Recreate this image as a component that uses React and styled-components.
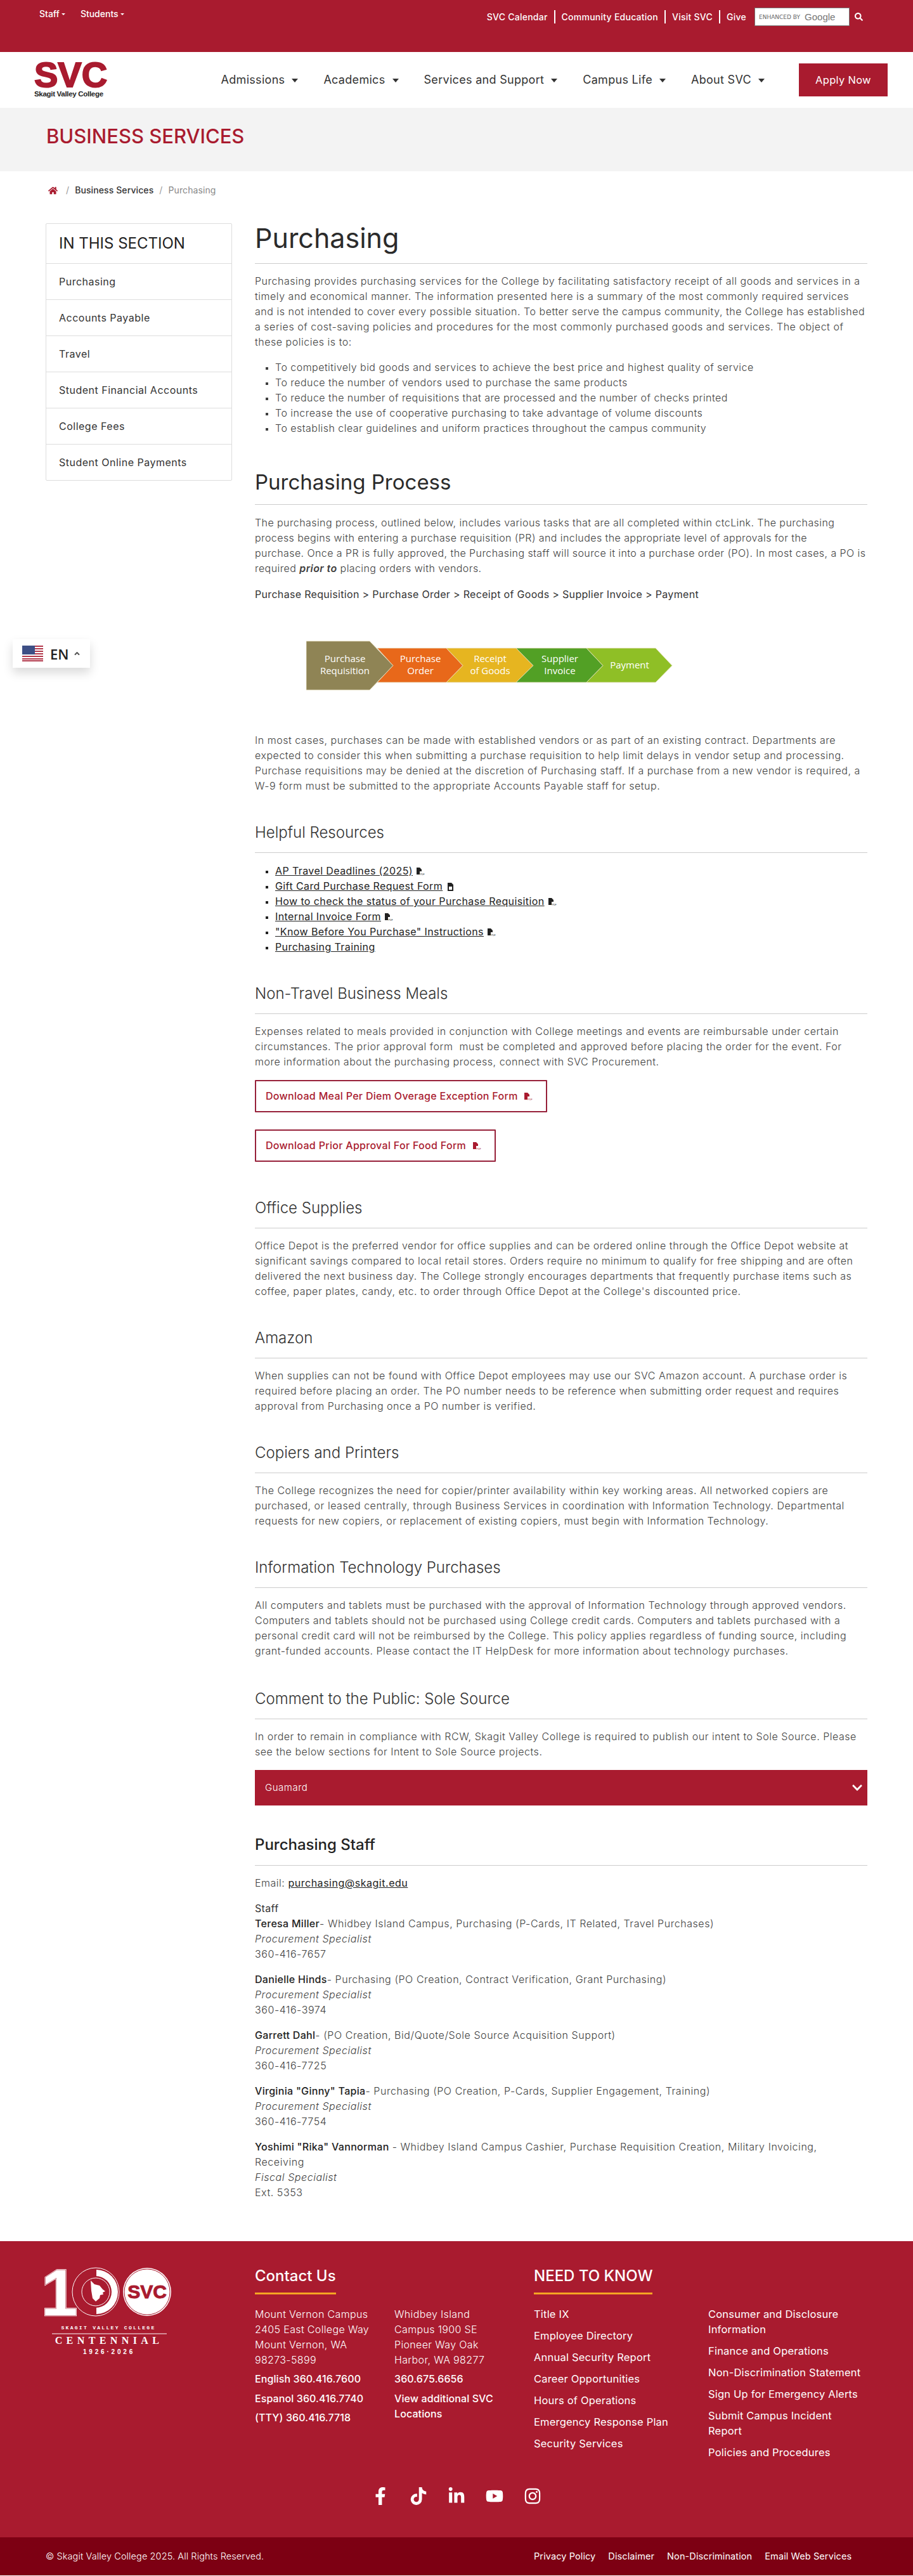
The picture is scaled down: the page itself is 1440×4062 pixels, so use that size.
import styled, { createGlobalStyle } from "styled-components";
import {
  FaHome,
  FaSearch,
  FaChevronDown,
  FaAngleUp,
  FaFacebookF,
  FaTiktok,
  FaLinkedinIn,
  FaYoutube,
  FaInstagram,
} from "react-icons/fa";

const CRIMSON = "#a91b2f";
const BODY_FONT = `Inter, "Noto Sans", sans-serif`;

const sections = ["Purchasing", "Accounts Payable", "Travel", "Student Financial Accounts", "College Fees", "Student Online Payments"];
const navItems = ["Admissions", "Academics", "Services and Support", "Campus Life", "About SVC"];
const goals = [
  "To competitively bid goods and services to achieve the best price and highest quality of service",
  "To reduce the number of vendors used to purchase the same products",
  "To reduce the number of requisitions that are processed and the number of checks printed",
  "To increase the use of cooperative purchasing to take advantage of volume discounts",
  "To establish clear guidelines and uniform practices throughout the campus community",
];
const resources = [
  { label: "AP Travel Deadlines (2025)", icon: "pdf" },
  { label: "Gift Card Purchase Request Form", icon: "doc" },
  { label: "How to check the status of your Purchase Requisition", icon: "pdf" },
  { label: "Internal Invoice Form", icon: "pdf" },
  { label: "\"Know Before You Purchase\" Instructions", icon: "pdf" },
  { label: "Purchasing Training" },
];
const staff = [
  { name: "Teresa Miller", role: "- Whidbey Island Campus, Purchasing (P-Cards, IT Related, Travel Purchases)", title: "Procurement Specialist", phone: "360-416-7657" },
  { name: "Danielle Hinds", role: "- Purchasing (PO Creation, Contract Verification, Grant Purchasing)", title: "Procurement Specialist", phone: "360-416-3974" },
  { name: "Garrett Dahl", role: "- (PO Creation, Bid/Quote/Sole Source Acquisition Support)", title: "Procurement Specialist", phone: "360-416-7725" },
  { name: "Virginia \"Ginny\" Tapia", role: "- Purchasing (PO Creation, P-Cards, Supplier Engagement, Training)", title: "Procurement Specialist", phone: "360-416-7754" },
  { name: "Yoshimi \"Rika\" Vannorman", role: " - Whidbey Island Campus Cashier, Purchase Requisition Creation, Military Invoicing, Receiving", title: "Fiscal Specialist", phone: "Ext. 5353" },
];
const needLeft = ["Title IX", "Employee Directory", "Annual Security Report", "Career Opportunities", "Hours of Operations", "Emergency Response Plan", "Security Services"];
const needRight = ["Consumer and Disclosure Information", "Finance and Operations", "Non-Discrimination Statement", "Sign Up for Emergency Alerts", "Submit Campus Incident Report", "Policies and Procedures"];

const steps = [
  { points: "483,1011 583,1011 620,1049.5 583,1088 483,1088", fill: "#8f8455", lines: ["Purchase", "Requisition"], x: 544 },
  { points: "595,1022 704,1022 730,1049.5 704,1076 595,1076 620,1049.5", fill: "#e8681a", lines: ["Purchase", "Order"], x: 663 },
  { points: "704,1022 814,1022 841,1049.5 814,1076 704,1076 730,1049.5", fill: "#e6b520", lines: ["Receipt", "of Goods"], x: 773 },
  { points: "814,1022 925,1022 951,1049.5 925,1076 814,1076 841,1049.5", fill: "#52a025", lines: ["Supplier", "Invoice"], x: 883 },
  { points: "925,1022 1034,1022 1060,1049.5 1034,1076 925,1076 951,1049.5", fill: "#8fbf26", lines: ["Payment"], x: 993 },
];

const PdfIcon = () => (
  <FileSvg viewBox="0 0 13 13">
    <path d="M0 0h5l3 3v3H5v5H0z" fill="currentColor" />
    <text x="5.500" y="11.500" fontSize="3.600" letterSpacing="0" fontFamily="Liberation Sans, sans-serif" fill="currentColor">PDF</text>
  </FileSvg>
);

const DocIcon = () => (
  <FileSvg viewBox="0 0 13 13">
    <path d="M2 0h6l3 3v10H2zM4 6v5h5V6z" fill="currentColor" fillRule="evenodd" />
  </FileSvg>
);

const ProcessDiagram = () => (
  <Diagram viewBox="483 1010 578 79">
    {steps.map((step) => (
      <polygon key={step.x} points={step.points} fill={step.fill} stroke="#e9e0c0" strokeWidth="0.8" />
    ))}
    {steps.map((step) =>
      step.lines.map((line, i) => (
        <text
          key={line + step.x}
          x={step.x}
          y={step.lines.length === 2 ? 1044 + i * 19 : 1054}
          textAnchor="middle"
          fontSize="15"
          letterSpacing="0"
          fontFamily="Open Sans, sans-serif"
          fill="#fff"
        >
          {line}
        </text>
      ))
    )}
  </Diagram>
);

const FlagIcon = () => (
  <Flag viewBox="0 0 33 25">
    <rect width="33" height="25" fill="#fff" />
    {[0, 4, 8, 12, 16, 20, 23].map((y) => (
      <rect key={y} y={y} width="33" height="2" fill="#b2394c" />
    ))}
    <rect width="20" height="14" fill="#3d4f85" />
  </Flag>
);

const CentennialLogo = () => (
  <LogoSvg viewBox="-12 -20 212 160">
    {["#fff", CRIMSON].map((c, i) => (
      <text key={c} x="22" y="75" textAnchor="middle" fontSize="104" fontWeight="700" fontFamily="Liberation Sans, sans-serif" fill="none" stroke={c} strokeWidth={i === 0 ? 2.5 : 1}>1</text>
    ))}
    <text x="22" y="75" textAnchor="middle" fontSize="104" fontWeight="700" fontFamily="Liberation Sans, sans-serif" fill="#fff">1</text>
    <ellipse cx="79" cy="38" rx="37" ry="38" fill={CRIMSON} stroke="#fff" strokeWidth="1" />
    <path d="M80 3a34 35 0 0 1 0 70z" fill="#fff" />
    <circle cx="79" cy="38" r="25" fill={CRIMSON} />
    <circle cx="79" cy="38" r="22" fill={CRIMSON} stroke="#fff" strokeWidth="1" />
    <path d="M71 20l6 6 8 2 5 6 4 3-4 2 1 3-5 1-1 5-6 5-5-5-2-12z" fill="#fff" />
    <circle cx="160" cy="38" r="38" fill="#fff" />
    <circle cx="160" cy="38" r="36" fill="none" stroke={CRIMSON} strokeWidth="1" />
    <text x="160" y="48" textAnchor="middle" fontSize="30" fontWeight="700" letterSpacing="0" fontFamily="Liberation Sans, sans-serif" fill={CRIMSON} stroke={CRIMSON} strokeWidth="1">SVC</text>
    <text x="99" y="97" textAnchor="middle" fontSize="8" fontWeight="700" letterSpacing="2.300" fontFamily="Liberation Mono, monospace" fill="#fff">SKAGIT VALLEY COLLEGE</text>
    <rect x="10" y="103.500" width="181" height="1" fill="#fff" />
    <text x="100" y="120" textAnchor="middle" fontSize="16" fontWeight="700" letterSpacing="6.400" fontFamily="Liberation Serif, serif" fill="#fff">CENTENNIAL</text>
    <text x="100" y="136" textAnchor="middle" fontSize="10" fontWeight="700" letterSpacing="3.800" fontFamily="Liberation Sans, sans-serif" fill="#fff">1926·2026</text>
  </LogoSvg>
);

const Section = ({ title, children, $mt }) => (
  <section>
    <SubTitle $mt={$mt}>{title}</SubTitle>
    {children}
  </section>
);

export default function App() {
  return (
    <>
      <GlobalStyle />
      <TopBar>
        <TopLeft>
          <TopMenu>Staff<TinyCaret /></TopMenu>
          <TopMenu>Students<TinyCaret /></TopMenu>
        </TopLeft>
        <TopRight>
          <TopLink>SVC Calendar</TopLink>
          <TopLink>Community Education</TopLink>
          <TopLink>Visit SVC</TopLink>
          <TopLink $last>Give</TopLink>
          <SearchBox>
            <small>ENHANCED BY</small>
            <b>Google</b>
          </SearchBox>
          <SearchButton><FaSearch /></SearchButton>
        </TopRight>
      </TopBar>

      <Header>
        <Logo>
          <LogoMark>SVC</LogoMark>
          <LogoName>Skagit Valley College</LogoName>
        </Logo>
        <Nav>
          {navItems.map((item) => (
            <NavItem key={item}>{item}<NavCaret /></NavItem>
          ))}
        </Nav>
        <ApplyButton>Apply Now</ApplyButton>
      </Header>

      <Banner>BUSINESS SERVICES</Banner>

      <Crumbs>
        <HomeLink><FaHome /></HomeLink>
        <Slash>/</Slash>
        <CrumbLink>Business Services</CrumbLink>
        <Slash>/</Slash>
        <CrumbCurrent>Purchasing</CrumbCurrent>
      </Crumbs>

      <Columns>
        <Sidebar>
          <SideTitle>IN THIS SECTION</SideTitle>
          {sections.map((s) => <SideItem key={s}>{s}</SideItem>)}
        </Sidebar>

        <Main>
          <PageTitle>Purchasing</PageTitle>
          <Para>
            Purchasing provides purchasing services for the College by facilitating satisfactory receipt of all goods and services in a timely and economical manner. The information presented here is a summary of the most commonly required services and is not intended to cover every possible situation. To better serve the campus community, the College has established a series of cost-saving policies and procedures for the most commonly purchased goods and services. The object of these policies is to:
          </Para>
          <SquareList>
            {goals.map((g) => <li key={g}>{g}</li>)}
          </SquareList>

          <SectionTitle>Purchasing Process</SectionTitle>
          <Para $ls="0.42px">
            The purchasing process, outlined below, includes various tasks that are all completed within ctcLink. The purchasing process begins with entering a purchase requisition (PR) and includes the appropriate level of approvals for the<br />
            purchase. Once a PR is fully approved, the Purchasing staff will source it into a purchase order (PO). In most cases, a PO is required <PriorTo>prior to</PriorTo> placing orders with vendors.
          </Para>
          <StepsLine>Purchase Requisition &gt; Purchase Order &gt; Receipt of Goods &gt; Supplier Invoice &gt; Payment</StepsLine>
          <ProcessDiagram />
          <Para>
            In most cases, purchases can be made with established vendors or as part of an existing contract. Departments are expected to consider this when submitting a purchase requisition to help limit delays in vendor setup and processing. Purchase requisitions may be denied at the discretion of Purchasing staff. If a purchase from a new vendor is required, a W-9 form must be submitted to the appropriate Accounts Payable staff for setup.
          </Para>

          <Section title="Helpful Resources">
            <SquareList $dark>
              {resources.map((r) => (
                <li key={r.label}>
                  <DocLink>{r.label}</DocLink>
                  {r.icon === "pdf" && <PdfIcon />}
                  {r.icon === "doc" && <DocIcon />}
                </li>
              ))}
            </SquareList>
          </Section>

          <Section title="Non-Travel Business Meals">
            <Para>
              Expenses related to meals provided in conjunction with College meetings and events are reimbursable under certain circumstances. The prior approval form&nbsp; must be completed and approved before placing the order for the event. For more information about the purchasing process, connect with SVC Procurement.
            </Para>
            <OutlineButton>Download Meal Per Diem Overage Exception Form <PdfIcon /></OutlineButton>
            <OutlineButton>Download Prior Approval For Food Form <PdfIcon /></OutlineButton>
          </Section>

          <Section title="Office Supplies" $mt="57px">
            <Para>
              Office Depot is the preferred vendor for office supplies and can be ordered online through the Office Depot website at significant savings compared to local retail stores. Orders require no minimum to qualify for free shipping and are often delivered the next business day. The College strongly encourages departments that frequently purchase items such as coffee, paper plates, candy, etc. to order through Office Depot at the College's discounted price.
            </Para>
          </Section>

          <Section title="Amazon">
            <Para>
              When supplies can not be found with Office Depot employees may use our SVC Amazon account. A purchase order is required before placing an order. The PO number needs to be reference when submitting order request and requires approval from Purchasing once a PO number is verified.
            </Para>
          </Section>

          <Section title="Copiers and Printers">
            <Para>
              The College recognizes the need for copier/printer availability within key working areas. All networked copiers are purchased, or leased centrally, through Business Services in coordination with Information Technology. Departmental requests for new copiers, or replacement of existing copiers, must begin with Information Technology.
            </Para>
          </Section>

          <Section title="Information Technology Purchases">
            <Para>
              All computers and tablets must be purchased with the approval of Information Technology through approved vendors. Computers and tablets should not be purchased using College credit cards. Computers and tablets purchased with a personal credit card will not be reimbursed by the College. This policy applies regardless of funding source, including grant-funded accounts. Please contact the IT HelpDesk for more information about technology purchases.
            </Para>
          </Section>

          <Section title="Comment to the Public: Sole Source" $mt="48px">
            <Para>
              In order to remain in compliance with RCW, Skagit Valley College is required to publish our intent to Sole Source. Please see the below sections for Intent to Sole Source projects.
            </Para>
          </Section>

          <Accordion>
            <span>Guamard</span>
            <FaChevronDown />
          </Accordion>

          <StaffTitle>Purchasing Staff</StaffTitle>
          <Para>Email: <MailLink>purchasing@skagit.edu</MailLink></Para>
          <StaffLabel>Staff</StaffLabel>
          {staff.map((person) => (
            <Person key={person.name}>
              <strong>{person.name}</strong>{person.role}
              <br />
              <em>{person.title}</em>
              <br />
              {person.phone}
            </Person>
          ))}
        </Main>
      </Columns>

      <Footer>
        <FooterTop>
          <LogoCol><CentennialLogo /></LogoCol>
          <ContactCol>
            <FooterHeading>Contact Us</FooterHeading>
            <ContactGrid>
              <div>
                <Address>Mount Vernon Campus<br />2405 East College Way<br />Mount Vernon, WA<br />98273-5899</Address>
                <Phone>English 360.416.7600</Phone>
                <Phone>Espanol 360.416.7740</Phone>
                <Phone>(TTY) 360.416.7718</Phone>
              </div>
              <div>
                <Address>Whidbey Island<br />Campus 1900 SE<br />Pioneer Way Oak<br />Harbor, WA 98277</Address>
                <Phone>360.675.6656</Phone>
                <Phone>View additional SVC Locations</Phone>
              </div>
            </ContactGrid>
          </ContactCol>
          <NeedCol>
            <FooterHeading>NEED TO KNOW</FooterHeading>
            <NeedGrid>
              <LinkList>{needLeft.map((l) => <li key={l}>{l}</li>)}</LinkList>
              <LinkList>{needRight.map((l) => <li key={l}>{l}</li>)}</LinkList>
            </NeedGrid>
          </NeedCol>
        </FooterTop>
        <Socials>
          <FaFacebookF />
          <FaTiktok />
          <FaLinkedinIn />
          <FaYoutube />
          <FaInstagram />
        </Socials>
        <BottomBar>
          <span>© Skagit Valley College 2025. All Rights Reserved.</span>
          <BottomLinks>
            <a>Privacy Policy</a>
            <a>Disclaimer</a>
            <a>Non-Discrimination</a>
            <a>Email Web Services</a>
          </BottomLinks>
        </BottomBar>
      </Footer>

      <LangSwitch>
        <FlagIcon />
        <LangCode>EN</LangCode>
        <FaAngleUp />
      </LangSwitch>
    </>
  );
}

const GlobalStyle = createGlobalStyle`
  html, body {
    margin: 0;
    padding: 0;
    background: #fff;
  }
  body {
    font-family: ${BODY_FONT};
    font-size: 16px;
    line-height: 24px;
    letter-spacing: 0.52px;
    color: #3f3f3f;
  }
  #root {
    position: relative;
  }
`;

const TopBar = styled.div`
  height: 82px;
  background: ${CRIMSON};
  color: #fff;
  display: flex;
  justify-content: space-between;
  align-items: flex-start;
  padding: 12px 79px 0 62px;
  box-sizing: border-box;
`;
const TopLeft = styled.div`
  display: flex;
  gap: 24px;
`;
const TopMenu = styled.span`
  font-size: 14px;
  line-height: 20px;
  font-weight: 500;
  letter-spacing: 0;
`;
const TinyCaret = styled.i`
  display: inline-block;
  margin-left: 3px;
  vertical-align: 3px;
  border-top: 3px solid #fff;
  border-left: 3px solid transparent;
  border-right: 3px solid transparent;
`;
const TopRight = styled.div`
  display: flex;
  align-items: center;
`;
const TopLink = styled.span`
  font-size: 14px;
  font-weight: 500;
  line-height: 21px;
  letter-spacing: 0.25px;
  padding-right: ${(p) => (p.$last ? "13px" : "10px")};
  margin-right: ${(p) => (p.$last ? "0" : "10px")};
  border-right: ${(p) => (p.$last ? "none" : "2px solid #fff")};
`;
const SearchBox = styled.div`
  width: 150px;
  height: 29px;
  background: #fff;
  border: 1px solid #777;
  box-sizing: border-box;
  display: flex;
  align-items: center;
  padding-left: 6px;
  gap: 7px;
  color: #666;
  letter-spacing: 0;
  small {
    font-size: 9px;
    font-family: "DejaVu Sans", sans-serif;
  }
  b {
    font-family: "Liberation Sans", sans-serif;
    font-weight: 400;
    font-size: 15px;
    color: #777;
  }
`;
const SearchButton = styled.span`
  display: flex;
  margin-left: 8px;
  font-size: 13px;
  color: #fff;
`;

const Header = styled.header`
  height: 88px;
  display: flex;
  align-items: center;
  padding: 0 40px 0 54px;
  box-sizing: border-box;
`;
const Logo = styled.div`
  display: flex;
  flex-direction: column;
  gap: 2px;
  width: 116px;
`;
const LogoMark = styled.span`
  font-family: "Liberation Sans", sans-serif;
  font-weight: 700;
  font-size: 56px;
  line-height: 42px;
  letter-spacing: 0;
  color: ${CRIMSON};
  -webkit-text-stroke: 2px ${CRIMSON};
`;
const LogoName = styled.span`
  font-family: "Liberation Sans", sans-serif;
  font-weight: 700;
  font-size: 11.500px;
  line-height: 14px;
  letter-spacing: -0.3px;
  color: #222;
  white-space: nowrap;
`;
const Nav = styled.nav`
  display: flex;
  gap: 40px;
  margin-left: auto;
  margin-right: 54px;
`;
const NavItem = styled.span`
  font-size: 18px;
  font-weight: 400;
  letter-spacing: 0.3px;
  color: #333;
  white-space: nowrap;
`;
const NavCaret = styled.i`
  display: inline-block;
  margin-left: 11px;
  vertical-align: 2px;
  border-top: 6px solid #333;
  border-left: 5px solid transparent;
  border-right: 5px solid transparent;
`;
const ApplyButton = styled.a`
  width: 140px;
  height: 52px;
  display: flex;
  align-items: center;
  justify-content: center;
  background: ${CRIMSON};
  color: #fff;
  font-size: 16.500px;
  font-weight: 400;
  letter-spacing: 0.3px;
`;

const Banner = styled.div`
  height: 100px;
  background: #f3f3f3;
  color: ${CRIMSON};
  font-size: 31px;
  font-weight: 500;
  letter-spacing: 0;
  line-height: 90px;
  padding-left: 73px;
`;

const Crumbs = styled.div`
  display: flex;
  align-items: center;
  height: 60px;
  padding-left: 76px;
  font-size: 14px;
  letter-spacing: 0.1px;
`;
const HomeLink = styled.span`
  display: flex;
  margin-right: 4px;
  color: ${CRIMSON};
  font-size: 15px;
`;
const Slash = styled.span`
  color: #999;
  margin: 0 9px;
`;
const CrumbLink = styled.span`
  color: #333;
  font-weight: 500;
`;
const CrumbCurrent = styled.span`
  color: #888;
`;

const Columns = styled.div`
  display: flex;
  align-items: flex-start;
  gap: 36px;
  padding: 22px 72px 49px;
  box-sizing: border-box;
`;
const Sidebar = styled.aside`
  width: 294px;
  flex: none;
  border: 1px solid #ddd;
  border-radius: 2px;
  box-sizing: border-box;
`;
const SideTitle = styled.h2`
  margin: 0;
  height: 62px;
  padding-left: 20px;
  display: flex;
  align-items: center;
  font-size: 24px;
  font-weight: 400;
  letter-spacing: 0;
  color: #222;
`;
const SideItem = styled.div`
  height: 57px;
  border-top: 1px solid #ddd;
  box-sizing: border-box;
  padding-left: 20px;
  display: flex;
  align-items: center;
  font-weight: 400;
  letter-spacing: 0.5px;
  color: #333;
`;

const Main = styled.main`
  width: 966px;
  margin-top: -4px;
`;
const PageTitle = styled.h1`
  margin: 0 0 15px;
  font-size: 43px;
  line-height: 54px;
  font-weight: 400;
  letter-spacing: 0;
  color: #2b2b2b;
  padding-bottom: 13px;
  border-bottom: 1px solid #ccc;
`;
const SectionTitle = styled.h2`
  margin: 53px 0 16px;
  font-size: 33px;
  line-height: 40px;
  font-weight: 400;
  letter-spacing: 0;
  color: #2b2b2b;
  padding-bottom: 15px;
  border-bottom: 1px solid #ccc;
`;
const SubTitle = styled.h3`
  margin: ${(p) => p.$mt || "46px"} 0 15px;
  font-size: 24px;
  line-height: 32px;
  font-weight: 300;
  letter-spacing: 0;
  color: #333;
  padding-bottom: 15px;
  border-bottom: 1px solid #ccc;
`;
const StaffTitle = styled.h3`
  margin: 45px 0 15px;
  font-size: 24px;
  line-height: 34px;
  font-weight: 500;
  letter-spacing: 0;
  color: #222;
  padding-bottom: 15px;
  border-bottom: 1px solid #ccc;
`;
const Para = styled.p`
  margin: 0;
  font-weight: 300;
  letter-spacing: ${(p) => p.$ls || "inherit"};
`;
const SquareList = styled.ul`
  margin: 16px 0 0;
  padding: 0 0 0 32px;
  list-style: square;
  font-weight: 300;
  letter-spacing: 0.46px;
  color: ${(p) => (p.$dark ? "#222" : "#3f3f3f")};
  li::marker {
    font-size: 12px;
  }
`;
const PriorTo = styled.em`
  font-weight: 600;
`;
const StepsLine = styled.p`
  margin: 17px 0 0;
  font-weight: 400;
  letter-spacing: 0.32px;
  color: #333;
`;
const Diagram = styled.svg`
  display: block;
  width: 578px;
  height: 79px;
  margin: 61px 0 66px 81px;
`;
const DocLink = styled.a`
  font-weight: 400;
  letter-spacing: 0.4px;
  color: #222;
  text-decoration: underline;
`;
const FileSvg = styled.svg`
  display: inline-block;
  width: 13px;
  height: 13px;
  margin-left: 6px;
  vertical-align: -2px;
`;
const OutlineButton = styled.a`
  display: table;
  height: 51px;
  line-height: 47px;
  margin: 17px 0 27px;
  padding: 0 21px 0 15px;
  border: 2px solid #97213a;
  border-radius: 1px;
  box-sizing: border-box;
  color: ${CRIMSON};
  font-weight: 500;
  letter-spacing: 0.3px;
  & + & {
    margin-top: 0;
    margin-bottom: 0;
  }
`;
const Accordion = styled.div`
  height: 56px;
  margin-top: 17px;
  background: ${CRIMSON};
  color: #fff;
  display: flex;
  align-items: center;
  justify-content: space-between;
  padding: 0 7px 0 16px;
  font-size: 15px;
  font-weight: 300;
  svg {
    font-size: 18px;
  }
`;
const MailLink = styled.a`
  color: #222;
  font-weight: 400;
  text-decoration: underline;
`;
const StaffLabel = styled.p`
  margin: 16px 0 0;
  font-weight: 400;
  letter-spacing: 0.35px;
  color: #333;
`;
const Person = styled.p`
  margin: 0 0 16px;
  font-weight: 300;
  letter-spacing: 0.56px;
  strong {
    font-weight: 500;
    letter-spacing: 0.3px;
    color: #222;
  }
`;

const Footer = styled.footer`
  background: ${CRIMSON};
  color: #fff;
  height: 527px;
  position: relative;
`;
const FooterTop = styled.div`
  display: flex;
  padding: 40px 0 0 72px;
  height: 362px;
  box-sizing: border-box;
`;
const LogoCol = styled.div`
  width: 330px;
  flex: none;
  padding-top: 2px;
`;
const LogoSvg = styled.svg`
  display: block;
  width: 212px;
  height: 160px;
  margin: -20px 0 0 -12px;
`;
const ContactCol = styled.div`
  width: 440px;
  flex: none;
`;
const FooterHeading = styled.h4`
  display: table;
  margin: 0 0 19px;
  font-size: 24px;
  line-height: 30px;
  font-weight: 500;
  letter-spacing: 0;
  padding-bottom: 11px;
  border-bottom: 3px solid #f5a623;
`;
const ContactGrid = styled.div`
  display: grid;
  grid-template-columns: 220px 190px;
  font-size: 16px;
  letter-spacing: 0.35px;
`;
const Address = styled.div`
  font-weight: 300;
  margin-bottom: 6px;
`;
const Phone = styled.div`
  font-weight: 500;
  letter-spacing: 0.1px;
  margin-bottom: 6.500px;
`;
const NeedCol = styled.div`
  flex: 1;
`;
const NeedGrid = styled.div`
  display: grid;
  grid-template-columns: 275px 250px;
  font-weight: 400;
  font-size: 16.500px;
  letter-spacing: 0.2px;
`;
const LinkList = styled.ul`
  margin: 0;
  padding: 0;
  list-style: none;
  li {
    margin-bottom: 10px;
  }
`;
const Socials = styled.div`
  height: 105px;
  display: flex;
  justify-content: center;
  align-items: flex-start;
  gap: 32px;
  padding-top: 26px;
  box-sizing: border-box;
  font-size: 28px;
`;
const BottomBar = styled.div`
  height: 60px;
  background: #7d0013;
  display: flex;
  align-items: center;
  padding-left: 72px;
  font-size: 14.500px;
  font-weight: 300;
  letter-spacing: 0.1px;
`;
const BottomLinks = styled.div`
  position: absolute;
  left: 842px;
  display: flex;
  gap: 20px;
  font-weight: 400;
`;

const LangSwitch = styled.div`
  position: absolute;
  top: 1008px;
  left: 20px;
  width: 122px;
  height: 45px;
  background: #fff;
  box-shadow: 0 8px 16px rgba(0, 0, 0, 0.15);
  display: flex;
  align-items: center;
  padding-left: 15px;
  box-sizing: border-box;
  color: #555;
  font-size: 13px;
`;
const Flag = styled.svg`
  width: 33px;
  height: 25px;
  flex: none;
`;
const LangCode = styled.span`
  margin: 0 6px 0 11px;
  font-family: "Open Sans", sans-serif;
  font-weight: 600;
  font-size: 22px;
  letter-spacing: 0;
  color: #222;
`;
